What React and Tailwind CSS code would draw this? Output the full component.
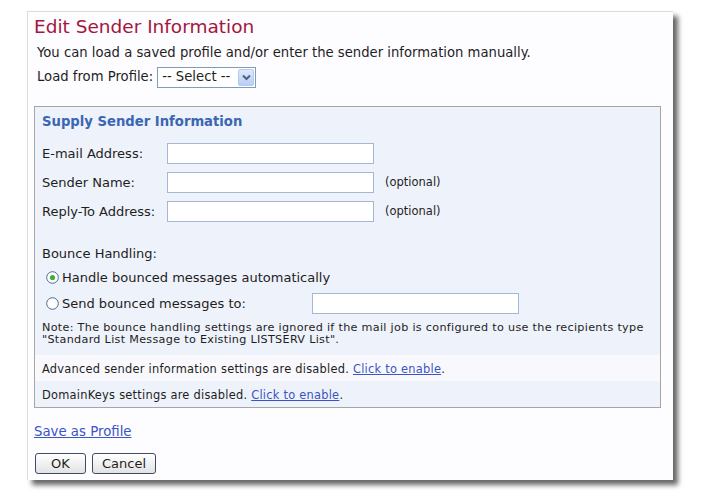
import React from "react";

const font = { fontFamily: '"DejaVu Sans", Verdana, sans-serif' };

function Radio({ checked }) {
  return (
    <svg width="13" height="13" viewBox="0 0 13 13" className="shrink-0">
      <circle cx="6.5" cy="6.5" r="5.8" fill="#ffffff" stroke="#4b6a8f" strokeWidth="1" />
      {checked && <circle cx="6.5" cy="6.5" r="2.6" fill="#3fae3a" />}
    </svg>
  );
}

function TextInput({ className = "" }) {
  return (
    <div className={"h-[21px] w-[207px] border border-[#a5b7d2] bg-white " + className} />
  );
}

export default function App() {
  return (
    <div className="w-[705px] h-[500px] bg-white pt-[11px] pl-[27px] text-[#1e1e1e]" style={font}>
      <div className="w-[646px] h-[469px] bg-[#fdfcff] border-t border-l border-[#dcdcdc] shadow-[5px_5px_5px_rgba(0,0,0,0.6)] px-[6px]">
        <div className="h-[29px] leading-[29px] text-[18.5px] text-[#a3173d] whitespace-nowrap">Edit Sender Information</div>
        <div className="h-[24px] leading-[24px] text-[13.2px] pl-[3px] whitespace-nowrap">
          You can load a saved profile and/or enter the sender information manually.
        </div>
        <div className="h-[24px] flex items-center text-[13.2px] pl-[3px] whitespace-nowrap">
          <span>Load from Profile:</span>
          <div className="ml-[4px] h-[21px] w-[99px] border border-[#7f9db9] bg-white flex items-center justify-between pl-[4px] pr-[1px]">
            <span>-- Select --</span>
            <div className="w-[16px] h-[17px] rounded-[2px] border border-[#b6c9ef] bg-gradient-to-b from-[#dfe8fb] to-[#b9cdf5] flex items-center justify-center">
              <svg width="9" height="7" viewBox="0 0 9 7">
                <path d="M1 1.5 L4.5 5 L8 1.5" fill="none" stroke="#4d6185" strokeWidth="2" />
              </svg>
            </div>
          </div>
        </div>

        <div className="mt-[17px] w-[627px] border border-[#a6a6a6] bg-[#eef2fa]">
          <div className="h-[30px] leading-[30px] pl-[7px] text-[13.2px] font-bold text-[#3b66b2] whitespace-nowrap">
            Supply Sender Information
          </div>
          <div className="mt-[2px] text-[13px] pl-[7px]">
            <div className="h-[29px] flex items-center">
              <div className="w-[125px] whitespace-nowrap">E-mail Address:</div>
              <TextInput />
            </div>
            <div className="h-[29px] flex items-center">
              <div className="w-[125px] whitespace-nowrap">Sender Name:</div>
              <TextInput />
              <span className="ml-[11px] text-[11.5px]">(optional)</span>
            </div>
            <div className="h-[29px] flex items-center">
              <div className="w-[125px] whitespace-nowrap">Reply-To Address:</div>
              <TextInput />
              <span className="ml-[11px] text-[11.5px]">(optional)</span>
            </div>
            <div className="mt-[16px] h-[24px] flex items-center">Bounce Handling:</div>
            <div className="h-[23px] flex items-center pl-[4px]">
              <Radio checked />
              <span className="ml-[3px] whitespace-nowrap">Handle bounced messages automatically</span>
            </div>
            <div className="h-[29px] flex items-center pl-[4px]">
              <div className="w-[266px] flex items-center">
                <Radio />
                <span className="ml-[3px] whitespace-nowrap">Send bounced messages to:</span>
              </div>
              <TextInput />
            </div>
            <div className="mt-[4px] pb-[9px] text-[11.2px] tracking-[0.3px] leading-[12px] whitespace-nowrap">
              <div>Note: The bounce handling settings are ignored if the mail job is configured to use the recipients type</div>
              <div>"Standard List Message to Existing LISTSERV List".</div>
            </div>
          </div>
          <div className="h-[26px] flex items-center pt-[3px] pl-[7px] bg-[#f9f9fd] text-[11.4px] tracking-[0.25px] whitespace-nowrap">
            Advanced sender information settings are disabled.&nbsp;
            <span className="text-[#3a55c4] underline">Click to enable</span>.
          </div>
          <div className="h-[26px] flex items-center pt-[3px] pl-[7px] text-[11.4px] tracking-[0.25px] whitespace-nowrap">
            DomainKeys settings are disabled.&nbsp;
            <span className="text-[#3a55c4] underline">Click to enable</span>.
          </div>
        </div>

        <div className="mt-[14px] h-[20px] flex items-center text-[13.3px] text-[#3a55c4] underline whitespace-nowrap">
          Save as Profile
        </div>
        <div className="mt-[11px] flex gap-[6px] pl-[1px] text-[13px]">
          <div className="h-[21px] w-[51px] rounded-[3px] border border-[#3f4c63] bg-gradient-to-b from-[#ffffff] to-[#e3e3e3] flex items-center justify-center">OK</div>
          <div className="h-[21px] w-[64px] rounded-[3px] border border-[#3f4c63] bg-gradient-to-b from-[#ffffff] to-[#e3e3e3] flex items-center justify-center">Cancel</div>
        </div>
      </div>
    </div>
  );
}
